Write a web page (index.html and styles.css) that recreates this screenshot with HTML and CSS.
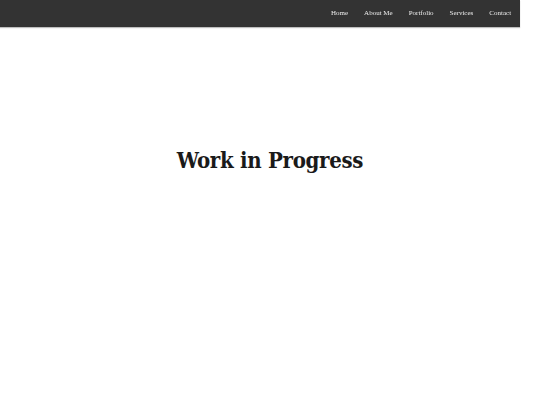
FILE: index.html
```html
<!DOCTYPE html>
<html>
<head>
<meta charset="utf-8">
<link rel="stylesheet" href="styles.css">
</head>
<body>
<header class="topbar">
  <nav class="nav">
    <a class="nav-link" href="#">Home</a>
    <a class="nav-link" href="#">About Me</a>
    <a class="nav-link" href="#">Portfolio</a>
    <a class="nav-link" href="#">Services</a>
    <a class="nav-link" href="#">Contact</a>
  </nav>
</header>
<main class="main">
  <h1 class="title">Work in Progress</h1>
</main>
</body>
</html>
```
FILE: styles.css
```css
html, body {
  margin: 0;
  padding: 0;
  background: #fff;
}
.topbar {
  width: 520px;
  height: 27px;
  background: #333333;
  box-shadow: 0 1px 1px rgba(0,0,0,0.25);
  display: flex;
  justify-content: flex-end;
  align-items: center;
}
.nav {
  display: flex;
  gap: 16px;
  padding-right: 9px;
  will-change: transform;
}
.nav-link {
  color: #ececec;
  text-decoration: none;
  font-family: "Liberation Serif", serif;
  font-size: 7px;
  line-height: 1;
}
.main {
  display: flex;
  justify-content: center;
  padding-top: 118px;
}
.title {
  margin: 0;
  font-family: "DejaVu Serif Condensed", "DejaVu Serif", serif;
  font-stretch: condensed;
  font-weight: bold;
  font-size: 22px;
  line-height: 1.4;
  color: #1a1a1a;
  letter-spacing: -0.3px;
}
```
